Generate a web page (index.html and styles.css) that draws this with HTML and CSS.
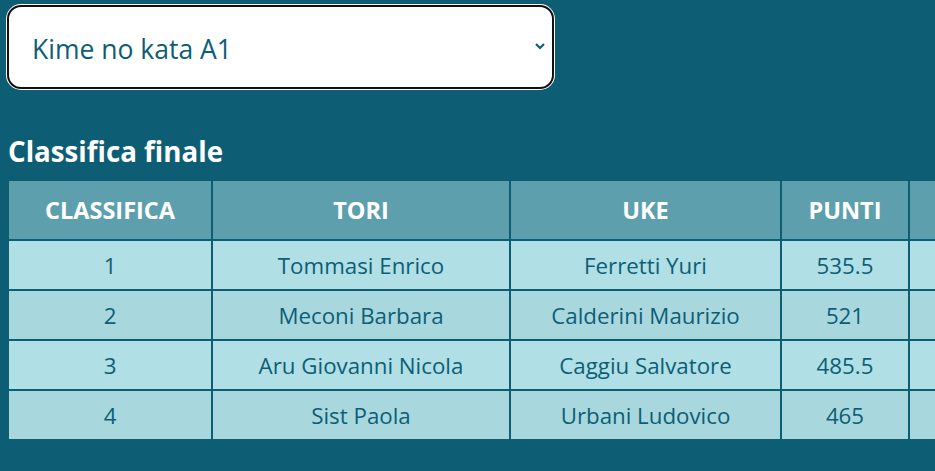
FILE: index.html
```html
<!DOCTYPE html>
<html lang="it">
<head>
<meta charset="utf-8">
<title>Classifica finale</title>
<link rel="stylesheet" href="styles.css">
</head>
<body>
<div class="page">
  <div class="select">
    <span class="select-value">Kime no kata A1</span>
    <svg class="chevron" width="12" height="8" viewBox="0 0 12 8"><polyline points="2,2 6,6 10,2" fill="none" stroke="#0d5e75" stroke-width="2.2"/></svg>
  </div>
  <h2 class="title">Classifica finale</h2>
  <div class="table-wrap">
    <table class="ranking">
      <colgroup>
        <col class="c1"><col class="c2"><col class="c3"><col class="c4"><col class="c5">
      </colgroup>
      <thead>
        <tr><th>CLASSIFICA</th><th>TORI</th><th>UKE</th><th>PUNTI</th><th>&nbsp;</th></tr>
      </thead>
      <tbody>
        <tr><td>1</td><td>Tommasi Enrico</td><td>Ferretti Yuri</td><td>535.5</td><td></td></tr>
        <tr><td>2</td><td>Meconi Barbara</td><td>Calderini Maurizio</td><td>521</td><td></td></tr>
        <tr><td>3</td><td>Aru Giovanni Nicola</td><td>Caggiu Salvatore</td><td>485.5</td><td></td></tr>
        <tr><td>4</td><td>Sist Paola</td><td>Urbani Ludovico</td><td>465</td><td></td></tr>
      </tbody>
    </table>
  </div>
</div>
</body>
</html>
```

FILE: styles.css
```css
html, body {
  margin: 0;
  padding: 0;
  overflow: hidden;
  background: #0d5e75;
}
body {
  font-family: "Open Sans", "Noto Sans", sans-serif;
  color: #0d5e75;
  width: 935px;
  height: 471px;
}
.page {
  padding: 5px 0 0 7px;
}
.select {
  box-sizing: border-box;
  width: 547px;
  height: 84px;
  background: #fff;
  border: 2px solid #111;
  border-radius: 14px;
  box-shadow: 0 0 0 1px #fff;
  display: flex;
  align-items: center;
  justify-content: space-between;
  padding: 0 6px 0 23px;
}
.select-value {
  font-size: 26.5px;
  color: #0d5e75;
  padding-top: 3px;
}
.chevron {
  display: block;
  margin-top: -2px;
}
.title {
  margin: 0 0 0 1px;
  padding-top: 45px;
  font-size: 27.7px;
  line-height: 34px;
  font-weight: 700;
  color: #fff;
}
.table-wrap {
  margin-top: 11px;
  width: 928px;
  overflow: hidden;
}
.ranking {
  border-collapse: collapse;
  table-layout: fixed;
  width: 1100px;
}
.c1 { width: 204px; }
.c2 { width: 298px; }
.c3 { width: 271px; }
.c4 { width: 128px; }
.c5 { width: 199px; }
.ranking th,
.ranking td {
  border: 2px solid #0d5e75;
  text-align: center;
  padding: 0;
}
.ranking th {
  height: 58px;
  background: #5e9fae;
  color: #fff;
  font-size: 23.5px;
  font-weight: 700;
}
.ranking td {
  height: 48px;
  background: #b0dfe5;
  font-size: 22.3px;
}
.ranking tbody tr:nth-child(even) td {
  background: #a8d8de;
}
```
